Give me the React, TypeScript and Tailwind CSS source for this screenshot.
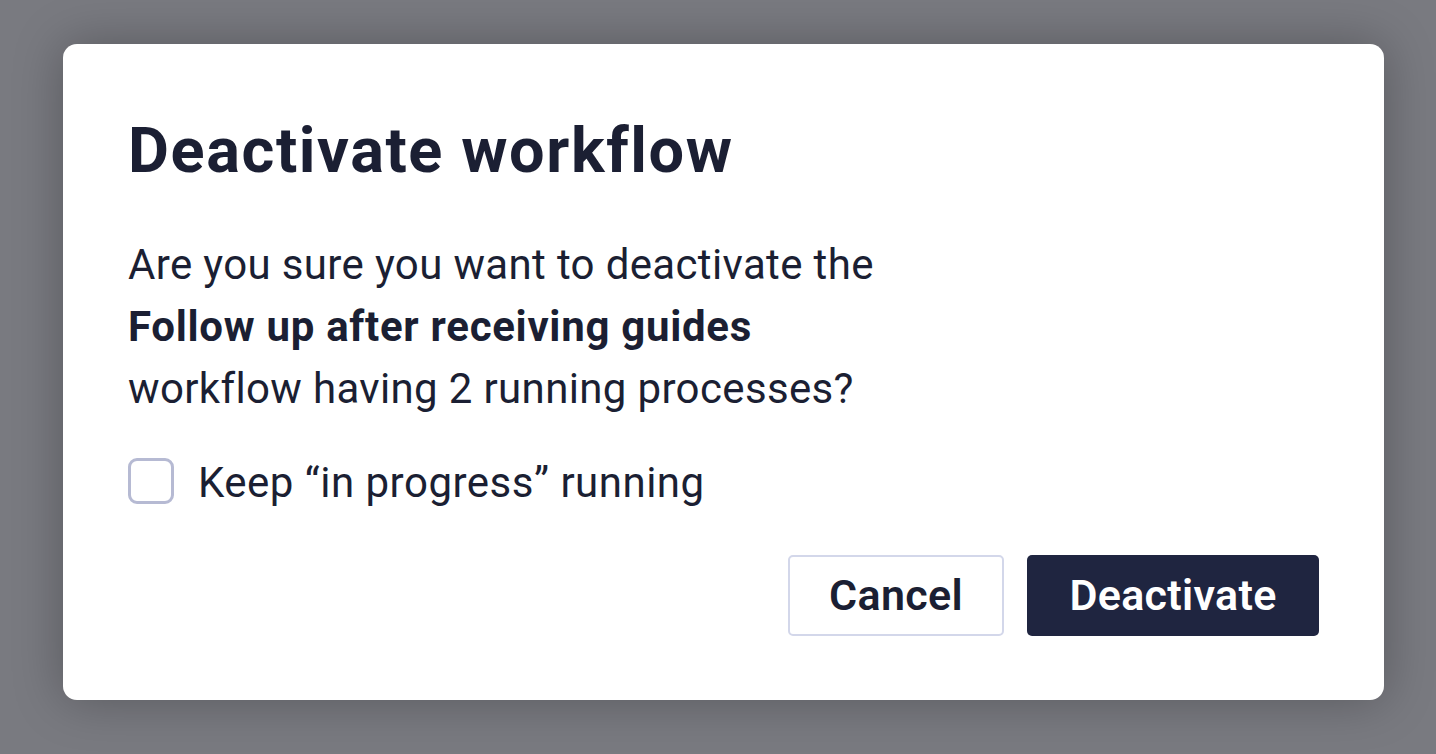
export default function App() {
  return (
    <div
      className="w-full h-[754px] bg-[#797a80] flex justify-start pl-[63px] pt-[44px] overflow-hidden"
      style={{ fontFamily: "Roboto, 'Noto Sans', sans-serif" }}
    >
      <div className="w-[1321px] h-[656px] bg-white rounded-[14px] shadow-[0_0_50px_rgba(0,0,0,0.28)] flex flex-col pl-[65px] pr-[65px] pt-[75px] pb-[64px] text-[#1b1f33] shrink-0">
        <h1 className="text-[63px] leading-[63px] font-bold tracking-[1.6px]">Deactivate workflow</h1>

        <p className="mt-[52px] text-[42px] leading-[62px] tracking-[0.35px]">
          Are you sure you want to deactivate the
          <br />
          <span className="font-bold tracking-[0.7px]">Follow up after receiving guides</span>
          <br />
          workflow having 2 running processes?
        </p>

        <label className="mt-[32px] flex items-center gap-[24px] h-[62px]">
          <span className="w-[46px] h-[46px] rounded-[9px] border-[3px] border-[#b6bad3] bg-white shrink-0 -mt-[4px]" />
          <span className="text-[42px] leading-[62px] tracking-[0.5px]">Keep “in progress” running</span>
        </label>

        <div className="mt-auto flex justify-end gap-[23px]">
          <button className="w-[216px] h-[81px] rounded-[5px] border-2 border-[#d3d7ea] bg-white text-[43px] font-semibold text-[#1b1f33] tracking-[0.3px]">
            Cancel
          </button>
          <button className="w-[292px] h-[81px] rounded-[5px] bg-[#1f2540] text-[43px] font-semibold text-white tracking-[0.3px]">
            Deactivate
          </button>
        </div>
      </div>
    </div>
  );
}
